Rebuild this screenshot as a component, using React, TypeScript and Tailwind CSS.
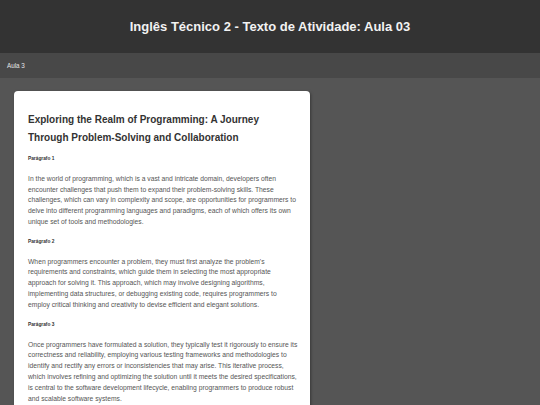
const paragraphs = [
  {
    label: "Parágrafo 1",
    text: "In the world of programming, which is a vast and intricate domain, developers often encounter challenges that push them to expand their problem-solving skills. These challenges, which can vary in complexity and scope, are opportunities for programmers to delve into different programming languages and paradigms, each of which offers its own unique set of tools and methodologies.",
  },
  {
    label: "Parágrafo 2",
    text: "When programmers encounter a problem, they must first analyze the problem's requirements and constraints, which guide them in selecting the most appropriate approach for solving it. This approach, which may involve designing algorithms, implementing data structures, or debugging existing code, requires programmers to employ critical thinking and creativity to devise efficient and elegant solutions.",
  },
  {
    label: "Parágrafo 3",
    text: "Once programmers have formulated a solution, they typically test it rigorously to ensure its correctness and reliability, employing various testing frameworks and methodologies to identify and rectify any errors or inconsistencies that may arise. This iterative process, which involves refining and optimizing the solution until it meets the desired specifications, is central to the software development lifecycle, enabling programmers to produce robust and scalable software systems.",
  },
];

export default function App() {
  return (
    <div className="min-h-[405px] bg-[#555555] font-['Liberation_Sans',Arial,sans-serif]">
      <header className="h-[53px] bg-[#333333] flex items-center justify-center">
        <h1 className="text-[13px] font-bold text-[#f2f2f2]">Inglês Técnico 2 - Texto de Atividade: Aula 03</h1>
      </header>
      <nav className="h-[25px] bg-[#484848] flex items-center px-[7px]">
        <span className="text-[6.3px] text-[#e6e6e6]">Aula 3</span>
      </nav>
      <main className="pt-[13px] pl-[14px]">
        <article className="w-[296px] bg-white rounded-[4px] shadow-[1px_1px_3px_rgba(0,0,0,0.35)] pt-[20px] pl-[14px] pr-[11px] pb-[14px]">
          <h2 className="text-[10px] leading-[18px] font-bold text-[#333333] mb-[8px] pr-[3px]">
            Exploring the Realm of Programming: A Journey Through Problem-Solving and Collaboration
          </h2>
          {paragraphs.map((p) => (
            <section key={p.label}>
              <h3 className="text-[4.8px] leading-[8px] font-bold text-[#333333] mb-[10.8px]">{p.label}</h3>
              <p className="text-[6.75px] leading-[10.8px] text-[#555555] mb-[10.1px]">{p.text}</p>
            </section>
          ))}
        </article>
      </main>
    </div>
  );
}
